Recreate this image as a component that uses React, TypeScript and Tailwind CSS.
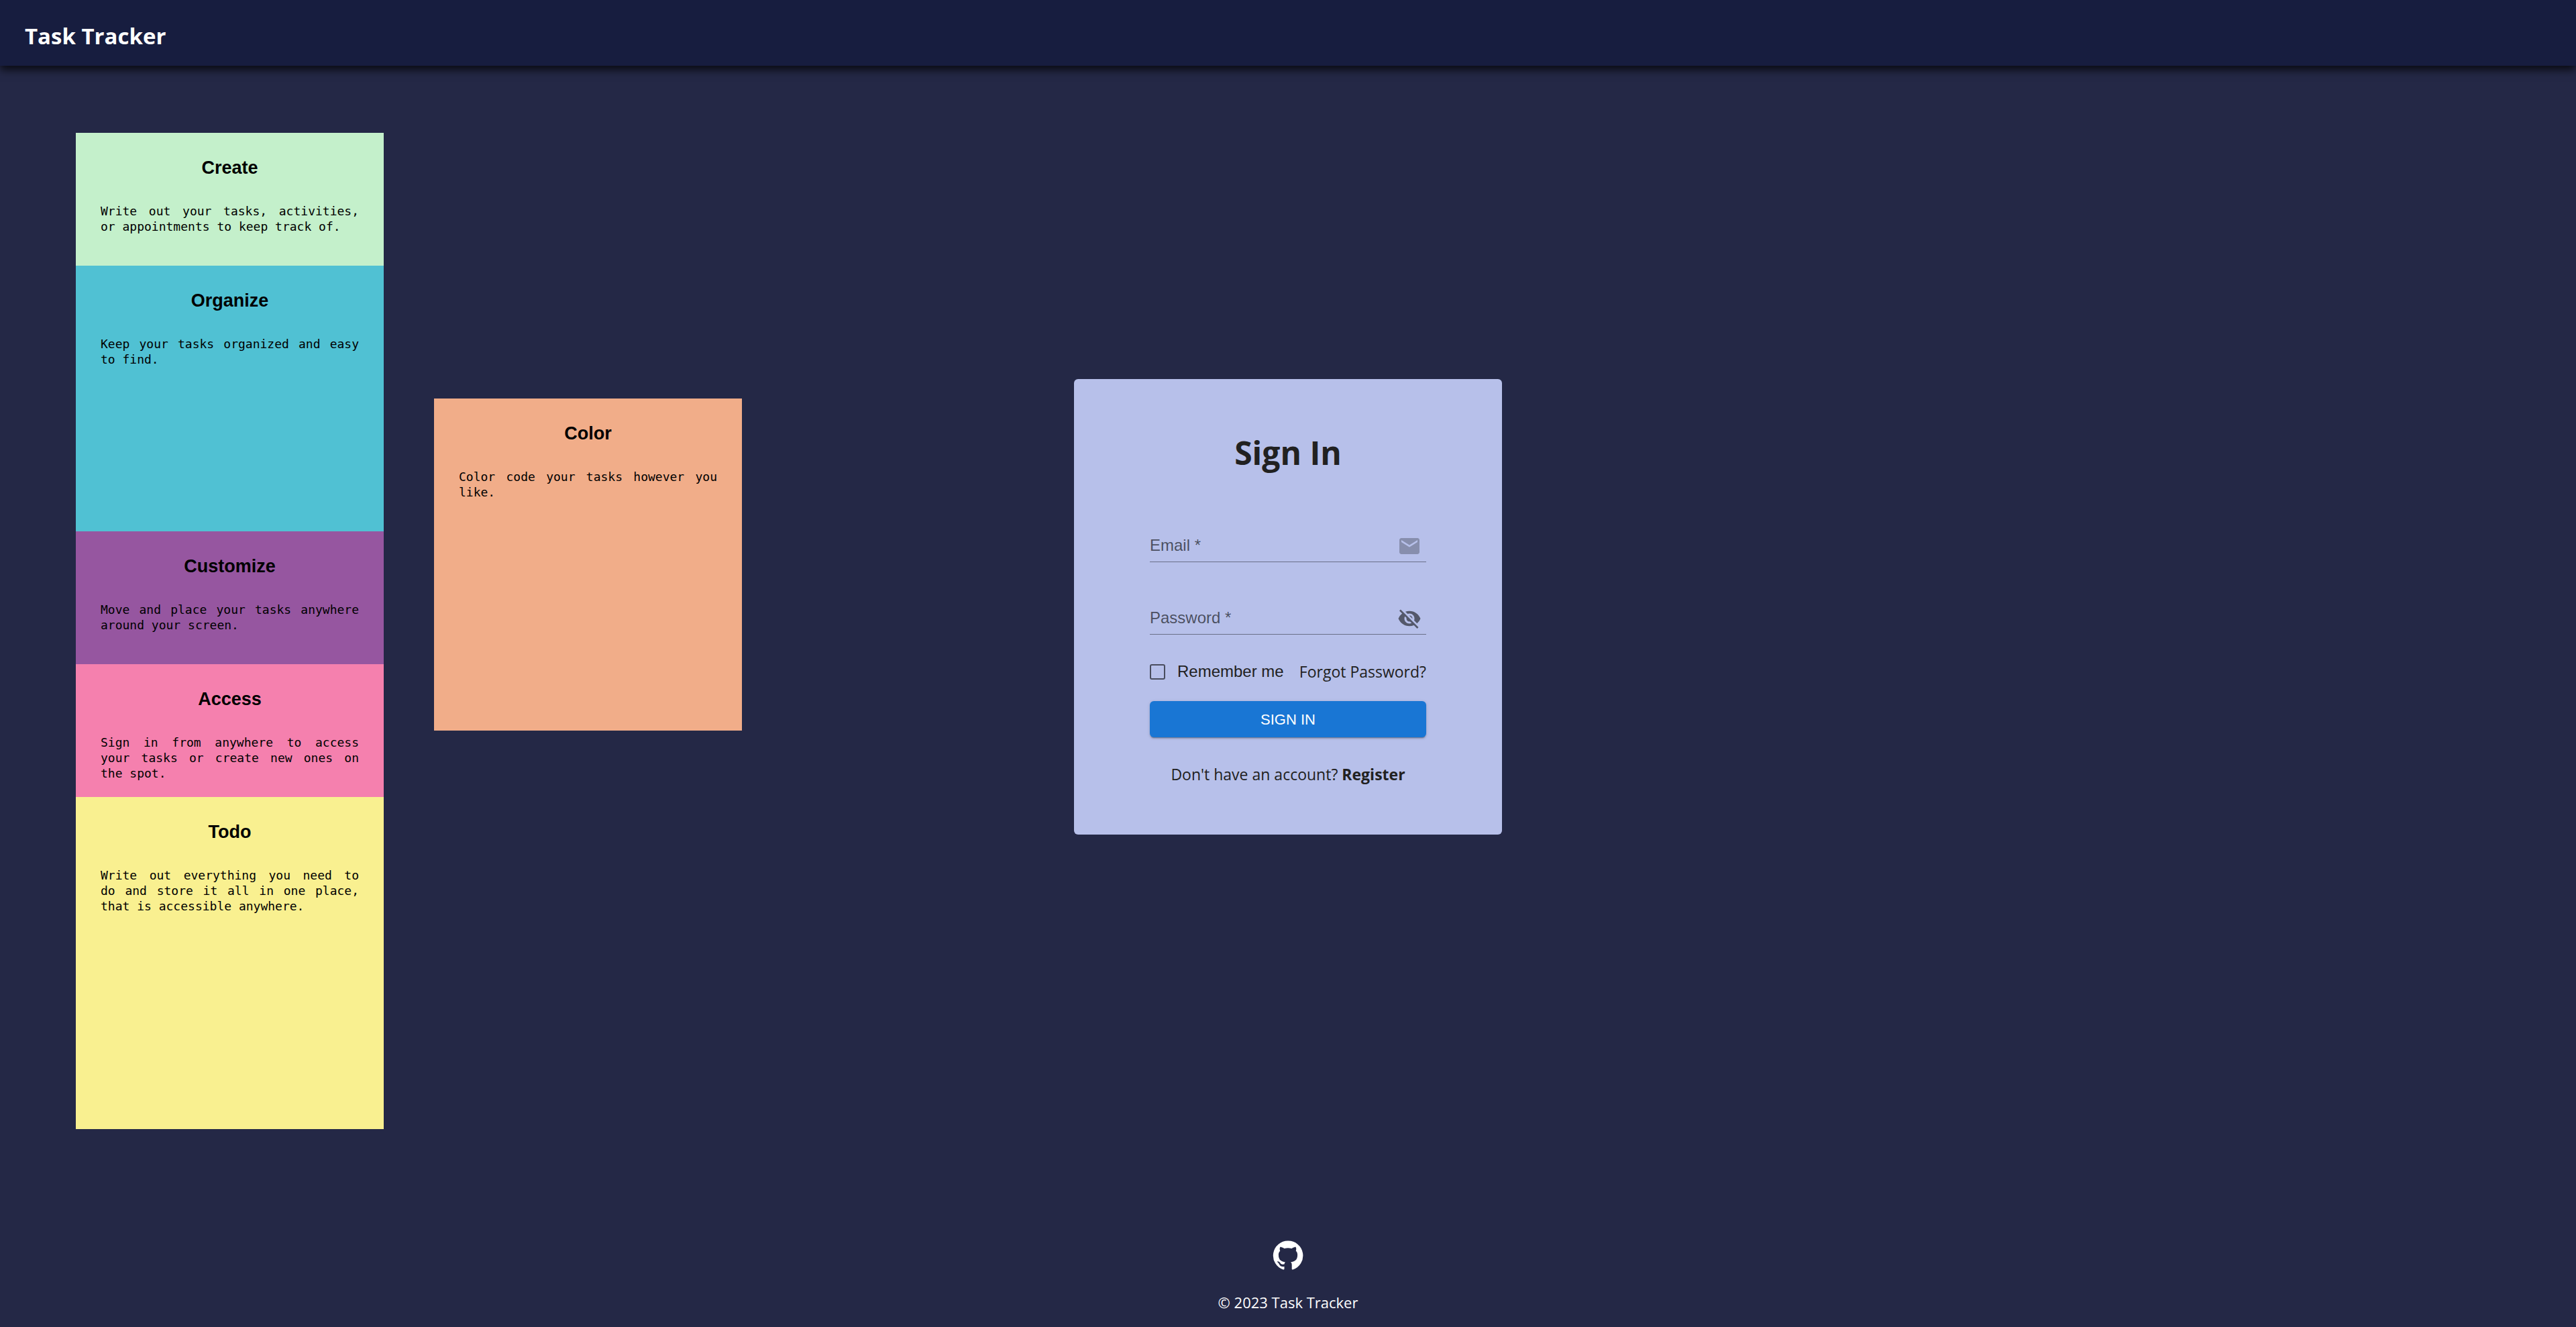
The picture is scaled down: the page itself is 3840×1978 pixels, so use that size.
import { useState } from "react";
import { MdEmail, MdVisibility, MdVisibilityOff } from "react-icons/md";

type Note = {
  title: string;
  body: string;
  className: string;
};

const notes: Note[] = [
  {
    title: "Create",
    body: "Write out your tasks, activities, or appointments to keep track of.",
    className: "xl:col-start-1 xl:row-start-1 row-span-2 bg-[#c4f0cb]",
  },
  {
    title: "Organize",
    body: "Keep your tasks organized and easy to find.",
    className: "xl:col-start-1 xl:row-start-3 row-span-4 bg-[#50c1d3]",
  },
  {
    title: "Customize",
    body: "Move and place your tasks anywhere around your screen.",
    className: "xl:col-start-1 xl:row-start-7 row-span-2 bg-[#9656a0]",
  },
  {
    title: "Access",
    body: "Sign in from anywhere to access your tasks or create new ones on the spot.",
    className: "xl:col-start-1 xl:row-start-9 row-span-2 bg-[#f580ae]",
  },
  {
    title: "Todo",
    body: "Write out everything you need to do\u00a0and store it all in one place, that is accessible anywhere.",
    className: "xl:col-start-1 xl:row-start-11 row-span-5 bg-[#f9f090]",
  },
  {
    title: "Color",
    body: "Color code your tasks however you like.",
    className: "xl:col-start-2 xl:row-start-5 row-span-5 bg-[#f1ad89]",
  },
];

function NoteCard({ title, body, className }: Note) {
  return (
    <article className={`px-[37px] py-9 text-black ${className}`}>
      <h2 className="mb-[37px] text-center font-['Liberation_Sans',Arial,sans-serif] text-[27px] leading-8 font-bold">
        {title}
      </h2>
      <p className="text-justify font-['DejaVu_Sans_Mono',monospace] text-[18px] leading-[23px]">
        {body}
      </p>
    </article>
  );
}

function Header() {
  return (
    <header className="relative flex h-[98px] items-center bg-[#171d3f] px-[37px] pt-2.5 shadow-[0_6px_12px_rgba(0,0,0,0.75)]">
      <a href="#" className="text-[33px] leading-[48px] font-bold text-white">
        Task Tracker
      </a>
    </header>
  );
}

function SignIn() {
  const [shown, setShown] = useState(false);
  const field = "flex h-12 items-center border-b border-black/[0.42] pr-[7px]";
  const label = "pr-2 pb-px font-['Liberation_Sans',Arial,sans-serif] text-[24px] text-black/60";
  const input =
    "min-w-0 flex-1 bg-transparent font-['Liberation_Sans',Arial,sans-serif] text-[24px] text-black/[0.87] outline-none";

  return (
    <form
      onSubmit={(e) => e.preventDefault()}
      className="flex w-full max-w-[638px] flex-col rounded-md bg-[#b7c0ea] px-8 pt-[77px] pb-[72px] text-[23px] text-[#212121] sm:px-[113px] xl:w-[638px]"
    >
      <h1 className="mb-[82px] text-center text-[48px] leading-[66px] font-bold">Sign In</h1>

      <div className={`mb-[60px] ${field}`}>
        <label htmlFor="email" className={label}>
          Email *
        </label>
        <input id="email" type="email" required className={input} />
        <MdEmail className="size-9 text-black/[0.26]" aria-hidden="true" />
      </div>

      <div className={field}>
        <label htmlFor="password" className={label}>
          Password *
        </label>
        <input id="password" type={shown ? "text" : "password"} required className={input} />
        <button
          type="button"
          aria-label="Toggle password visibility"
          onClick={() => setShown(!shown)}
          className="text-black/[0.54]"
        >
          {shown ? <MdVisibility className="size-9" /> : <MdVisibilityOff className="size-9" />}
        </button>
      </div>

      <div className="mt-[37px] mb-[26px] flex min-h-9 flex-wrap items-center justify-between">
        <label className="flex items-center gap-[18px] font-['Liberation_Sans',Arial,sans-serif] text-[24px]">
          <input
            type="checkbox"
            className="size-[23px] appearance-none rounded-[3px] border-2 border-black/60 checked:bg-[#1976d2]"
          />
          Remember me
        </label>
        <a href="#" className="leading-9">
          Forgot Password?
        </a>
      </div>

      <button
        type="submit"
        className="h-[54px] rounded-md bg-[#1976d4] font-['Liberation_Sans',Arial,sans-serif] text-[22px] text-white shadow-[0_3px_1px_-2px_rgba(0,0,0,0.2),0_2px_2px_rgba(0,0,0,0.14),0_1px_5px_rgba(0,0,0,0.12)]"
      >
        SIGN IN
      </button>

      <p className="mt-[37px] text-center leading-9">
        Don't have an account?{" "}
        <a href="#" className="font-bold">
          Register
        </a>
      </p>
    </form>
  );
}

function Footer() {
  return (
    <footer className="flex flex-col items-center gap-7 pt-[136px] pb-[19px] text-white">
      <a href="#" aria-label="GitHub">
        <svg viewBox="0 0 24 24" className="size-12" fill="currentColor" aria-hidden="true">
          <path d="M12 1.27a11 11 0 00-3.48 21.46c.55.09.73-.28.73-.55v-1.84c-3.03.64-3.67-1.46-3.67-1.46-.55-1.29-1.28-1.65-1.28-1.65-.92-.65.1-.65.1-.65 1.1 0 1.73 1.1 1.73 1.1.92 1.65 2.57 1.2 3.21.92a2 2 0 01.64-1.47c-2.47-.27-5.04-1.19-5.04-5.5 0-1.1.46-2.1 1.2-2.84a3.76 3.76 0 010-2.93s.91-.28 3.11 1.1c1.8-.49 3.7-.49 5.5 0 2.1-1.38 3.02-1.1 3.02-1.1a3.76 3.76 0 01.1 2.93c.83.74 1.2 1.74 1.2 2.94 0 4.21-2.57 5.13-5.04 5.4.45.37.82.92.82 2.02v3.03c0 .27.1.64.73.55A11 11 0 0012 1.27" />
        </svg>
      </a>
      <p className="text-[22px] leading-9">© 2023 Task Tracker</p>
    </footer>
  );
}

export default function App() {
  return (
    <div className="flex min-h-screen flex-col bg-[#242846] font-['Open_Sans','Noto_Sans',sans-serif]">
      <Header />
      <main className="grid flex-1 justify-items-center gap-12 px-6 xl:grid-cols-[1fr_auto_1fr] xl:justify-items-start xl:gap-0 xl:px-0">
        <section
          aria-label="Features"
          className="grid auto-rows-[99px] gap-x-[75px] self-start pt-[100px] xl:grid-cols-[repeat(2,minmax(0,459px))] xl:pl-[113px]"
        >
          {notes.map((note) => (
            <NoteCard key={note.title} {...note} />
          ))}
        </section>
        <section aria-label="Sign in" className="self-center">
          <SignIn />
        </section>
      </main>
      <Footer />
    </div>
  );
}
